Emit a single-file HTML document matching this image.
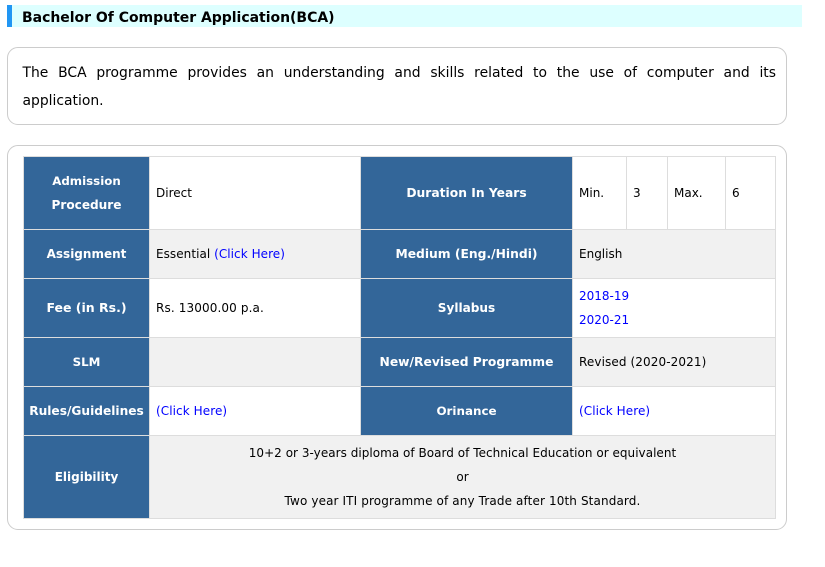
<!DOCTYPE html>
<html>
<head>
<meta charset="utf-8">
<style>
html,body{margin:0;padding:0;background:#fff;width:825px;height:567px;overflow:hidden}
body{position:relative;font-family:"DejaVu Sans",Verdana,sans-serif;color:#000}
div{position:absolute;box-sizing:border-box}
.banner{left:7px;top:5px;width:795px;height:22px;background:#ddffff;border-left:5px solid #2196f3}
.title{left:22px;top:9px;font-size:14px;font-weight:bold;line-height:19px;white-space:nowrap;letter-spacing:-.02px}
.box{left:7px;width:780px;border:1px solid #ccc;border-radius:11px}
.p{left:22.5px;width:753.5px;font-size:13.9px;line-height:28px;text-align:justify;color:#000}
.c{background:#fff;border:1px solid #ddd;margin:0}
.g{background:#f1f1f1}
.h{background:#336699;border:1px solid #ddd}
.t{font-size:12px;line-height:24px;white-space:nowrap;height:24px}
.b{font-weight:bold;color:#fff;text-align:center;font-size:12.2px}
a{color:#0000ff;text-decoration:none}
</style>
</head>
<body>
<div class="banner"></div>
<div class="title">Bachelor Of Computer Application(BCA)</div>
<div class="box" style="top:47px;height:78px"></div>
<div class="p" style="top:59px">The BCA programme provides an understanding and skills related to the use of computer and its application.</div>
<div class="box" style="top:145px;height:385px"></div>

<!-- row 1 -->
<div class="h" style="left:23px;top:156px;width:127px;height:74px"></div>
<div class="c" style="left:149px;top:156px;width:212px;height:74px"></div>
<div class="h" style="left:360px;top:156px;width:213px;height:74px"></div>
<div class="c" style="left:572px;top:156px;width:55px;height:74px"></div>
<div class="c" style="left:626px;top:156px;width:42px;height:74px"></div>
<div class="c" style="left:667px;top:156px;width:59px;height:74px"></div>
<div class="c" style="left:725px;top:156px;width:51px;height:74px"></div>
<!-- row 2 -->
<div class="h" style="left:23px;top:229px;width:127px;height:50px"></div>
<div class="c g" style="left:149px;top:229px;width:212px;height:50px"></div>
<div class="h" style="left:360px;top:229px;width:213px;height:50px"></div>
<div class="c g" style="left:572px;top:229px;width:204px;height:50px"></div>
<!-- row 3 -->
<div class="h" style="left:23px;top:278px;width:127px;height:60px"></div>
<div class="c" style="left:149px;top:278px;width:212px;height:60px"></div>
<div class="h" style="left:360px;top:278px;width:213px;height:60px"></div>
<div class="c" style="left:572px;top:278px;width:204px;height:60px"></div>
<!-- row 4 -->
<div class="h" style="left:23px;top:337px;width:127px;height:50px"></div>
<div class="c g" style="left:149px;top:337px;width:212px;height:50px"></div>
<div class="h" style="left:360px;top:337px;width:213px;height:50px"></div>
<div class="c g" style="left:572px;top:337px;width:204px;height:50px"></div>
<!-- row 5 -->
<div class="h" style="left:23px;top:386px;width:127px;height:50px"></div>
<div class="c" style="left:149px;top:386px;width:212px;height:50px"></div>
<div class="h" style="left:360px;top:386px;width:213px;height:50px"></div>
<div class="c" style="left:572px;top:386px;width:204px;height:50px"></div>
<!-- row 6 -->
<div class="h" style="left:23px;top:435px;width:127px;height:84px"></div>
<div class="c g" style="left:149px;top:435px;width:627px;height:84px"></div>

<!-- header text -->
<div class="t b" style="left:24px;width:125px;top:169px;font-size:11.8px">Admission</div>
<div class="t b" style="left:24px;width:125px;top:193px;font-size:12.1px">Procedure</div>
<div class="t b" style="left:24px;width:125px;top:242px;font-size:12px">Assignment</div>
<div class="t b" style="left:24px;width:125px;top:296px;font-size:12.5px">Fee (in Rs.)</div>
<div class="t b" style="left:24px;width:125px;top:350px;font-size:11.8px">SLM</div>
<div class="t b" style="left:24px;width:125px;top:399px">Rules/Guidelines</div>
<div class="t b" style="left:24px;width:125px;top:465px;font-size:12px">Eligibility</div>
<div class="t b" style="left:361px;width:211px;top:181px;font-size:12.3px">Duration In Years</div>
<div class="t b" style="left:361px;width:211px;top:242px;font-size:12.3px">Medium (Eng./Hindi)</div>
<div class="t b" style="left:361px;width:211px;top:296px;font-size:12.1px">Syllabus</div>
<div class="t b" style="left:361px;width:211px;top:350px;font-size:12.3px">New/Revised Programme</div>
<div class="t b" style="left:361px;width:211px;top:399px;font-size:11.9px">Orinance</div>

<!-- value text -->
<div class="t" style="left:156px;top:181px">Direct</div>
<div class="t" style="left:156px;top:242px;letter-spacing:.05px">Essential <a href="#">(Click Here)</a></div>
<div class="t" style="left:156px;top:296px;letter-spacing:.12px">Rs. 13000.00 p.a.</div>
<div class="t" style="left:156px;top:399px;letter-spacing:.08px"><a href="#">(Click Here)</a></div>
<div class="t" style="left:579px;top:181px">Min.</div>
<div class="t" style="left:633px;top:181px">3</div>
<div class="t" style="left:674px;top:181px">Max.</div>
<div class="t" style="left:732px;top:181px">6</div>
<div class="t" style="left:579px;top:242px">English</div>
<div class="t" style="left:579px;top:284px"><a href="#">2018-19</a></div>
<div class="t" style="left:579px;top:308px"><a href="#">2020-21</a></div>
<div class="t" style="left:579px;top:350px;letter-spacing:.1px">Revised (2020-2021)</div>
<div class="t" style="left:579px;top:399px;letter-spacing:.08px"><a href="#">(Click Here)</a></div>
<div class="t" style="left:150px;width:625px;top:441px;text-align:center;letter-spacing:.03px">10+2 or 3-years diploma of Board of Technical Education or equivalent</div>
<div class="t" style="left:150px;width:625px;top:465px;text-align:center">or</div>
<div class="t" style="left:150px;width:625px;top:489px;text-align:center;letter-spacing:.12px">Two year ITI programme of any Trade after 10th Standard.</div>
</body>
</html>
